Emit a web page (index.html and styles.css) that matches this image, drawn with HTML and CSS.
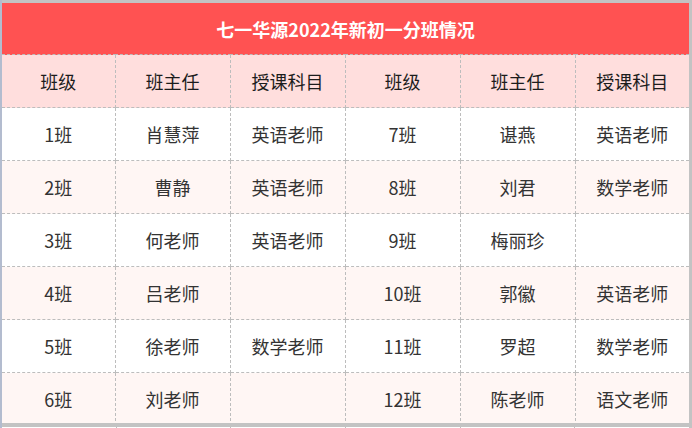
FILE: index.html
```html
<!DOCTYPE html>
<html lang="zh-CN">
<head>
<meta charset="utf-8">
<title>七一华源2022年新初一分班情况</title>
<link rel="stylesheet" href="styles.css">
</head>
<body>
<div class="frame">
  <div class="sheet">
    <table class="classes">
      <colgroup>
        <col class="c1"><col class="c2"><col class="c3"><col class="c4"><col class="c5"><col class="c6">
      </colgroup>
      <thead>
        <tr class="title-row"><th colspan="6" class="title">七一华源2022年新初一分班情况</th></tr>
        <tr class="head-row">
          <th>班级</th><th>班主任</th><th>授课科目</th><th>班级</th><th>班主任</th><th>授课科目</th>
        </tr>
      </thead>
      <tbody>
        <tr><td>1班</td><td>肖慧萍</td><td>英语老师</td><td>7班</td><td>谌燕</td><td>英语老师</td></tr>
        <tr class="alt"><td>2班</td><td>曹静</td><td>英语老师</td><td>8班</td><td>刘君</td><td>数学老师</td></tr>
        <tr><td>3班</td><td>何老师</td><td>英语老师</td><td>9班</td><td>梅丽珍</td><td></td></tr>
        <tr class="alt"><td>4班</td><td>吕老师</td><td></td><td>10班</td><td>郭徽</td><td>英语老师</td></tr>
        <tr><td>5班</td><td>徐老师</td><td>数学老师</td><td>11班</td><td>罗超</td><td>数学老师</td></tr>
        <tr class="alt"><td>6班</td><td>刘老师</td><td></td><td>12班</td><td>陈老师</td><td>语文老师</td></tr>
      </tbody>
    </table>
  </div>
  <div class="gap"></div>
  <div class="tail">
    <span></span><span></span><span></span><span></span><span></span><span></span>
  </div>
</div>
</body>
</html>
```

FILE: styles.css
```css
html, body {
  margin: 0;
  padding: 0;
}

body {
  background: #c3c3c3;
  width: 692px;
  height: 428px;
  overflow: hidden;
  font-family: "Noto Sans CJK SC", "Noto Sans", sans-serif;
}

.frame {
  padding: 3px 3px 0 0;
  border-left: 2px solid #b3bccf;
  height: 425px;
}

.sheet {
  width: 687px;
  height: 420px;
  overflow: hidden;
  background: #ffffff;
}

.classes {
  width: 687px;
  border-collapse: collapse;
  table-layout: fixed;
  font-size: 18px;
}

.c1 { width: 113px; }
.c2 { width: 115px; }
.c3 { width: 115px; }
.c4 { width: 115px; }
.c5 { width: 115px; }
.c6 { width: 114px; }

.classes th,
.classes td {
  padding: 0;
  text-align: center;
  border-right: 1px dashed #bdbdbd;
  border-bottom: 1px dashed #bdbdbd;
  font-weight: 400;
}

.classes th:last-child,
.classes td:last-child {
  border-right: none;
}

.title-row .title {
  height: 51px;
  background: #ff5252;
  color: #ffffff;
  font-weight: 700;
  font-size: 18px;
  border-right: none;
}

.head-row th {
  height: 52px;
  background: #ffdedd;
  color: #1c1c1c;
}

.classes td {
  height: 52px;
  color: #333333;
  background: #ffffff;
}

.classes tr.alt td {
  background: #fff6f4;
}

.gap {
  height: 4px;
  background: #c3c3c3;
}

.tail {
  display: flex;
  height: 1px;
  width: 687px;
  background: #ffffff;
}

.tail span {
  flex: 1;
  border-right: 1px dashed #bdbdbd;
}

.tail span:last-child {
  border-right: none;
}
```
